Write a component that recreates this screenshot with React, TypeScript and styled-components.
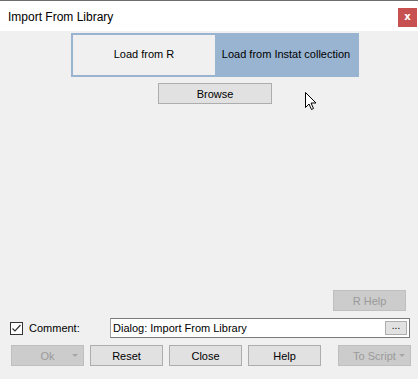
import React from "react";
import styled, { createGlobalStyle } from "styled-components";

const Global = createGlobalStyle`
  html, body { margin: 0; padding: 0; background: #f0f0f0; }
  * { box-sizing: border-box; }
`;

const Window = styled.div`
  width: 418px;
  height: 379px;
  display: flex;
  flex-direction: column;
  font-family: "Liberation Sans", Arial, sans-serif;
  font-size: 11px;
  color: #000;
  position: relative;
  overflow: hidden;
`;

const TitleBar = styled.div`
  height: 31px;
  flex: none;
  background: #fff;
  border-top: 1px solid #6d6d6d;
  display: flex;
  align-items: flex-start;
  justify-content: space-between;
  padding: 0 1px 0 8px;
`;

const Title = styled.div`
  font-family: "Liberation Sans", Arial, sans-serif;
  font-size: 12px;
  line-height: 16px;
  margin-top: 8px;
  color: #000;
`;

const CloseBtn = styled.div`
  width: 19px;
  height: 19px;
  margin-top: 7px;
  background: #c75050;
  color: #fff;
  font-family: "DejaVu Sans", sans-serif;
  font-weight: bold;
  font-size: 10px;
  line-height: 18px;
  text-align: center;
`;

const Body = styled.div`
  flex: 1;
  background: #f0f0f0;
  display: flex;
  flex-direction: column;
  padding: 2px 0 13px 0;
`;

const Toggle = styled.div`
  margin-left: 71px;
  width: 288px;
  height: 44px;
  border: 2px solid #99b4d1;
  display: flex;
`;

const ToggleOption = styled.div<{ $active?: boolean }>`
  flex: 1;
  display: flex;
  align-items: center;
  justify-content: center;
  background: ${(p) => (p.$active ? "#99b4d1" : "#f0f0f0")};
  font-size: 11px;
  padding-bottom: 2px;
`;

const BrowseRow = styled.div`
  margin: 6px 0 0 158px;
`;

const Button = styled.div<{ $w?: number; $disabled?: boolean }>`
  width: ${(p) => p.$w ?? 73}px;
  height: 21px;
  border: 1px solid ${(p) => (p.$disabled ? "#bfbfbf" : "#adadad")};
  background: ${(p) => (p.$disabled ? "#cccccc" : "#e1e1e1")};
  color: ${(p) => (p.$disabled ? "#9a9a9a" : "#000")};
  display: flex;
  align-items: center;
  justify-content: center;
  font-size: 11px;
  position: relative;
  flex: none;
`;

const Arrow = styled.span`
  position: absolute;
  right: 5px;
  top: 8px;
  width: 0;
  height: 0;
  border-left: 3px solid transparent;
  border-right: 3px solid transparent;
  border-top: 3px solid #a6a6a6;
`;

const Spacer = styled.div`
  flex: 1;
`;

const HelpRow = styled.div`
  display: flex;
  justify-content: flex-end;
  padding-right: 12px;
`;

const CommentRow = styled.div`
  display: flex;
  align-items: center;
  margin-top: 7px;
  height: 20px;
  padding-left: 10px;
`;

const CheckBox = styled.div`
  width: 13px;
  height: 13px;
  border: 1px solid #333;
  background: #fff;
  display: flex;
  align-items: center;
  justify-content: center;
  flex: none;
`;

const Label = styled.span`
  margin-left: 6px;
  width: 81px;
`;

const TextBox = styled.div`
  width: 300px;
  height: 20px;
  background: #fff;
  border: 1px solid #7a7a7a;
  border-left-color: #a0a0a0;
  display: flex;
  align-items: center;
  padding-left: 2px;
  position: relative;
`;

const Dots = styled.div`
  position: absolute;
  right: 2px;
  top: 2px;
  width: 22px;
  height: 14px;
  border: 1px solid #adadad;
  background: #e1e1e1;
  font-size: 10px;
  line-height: 8px;
  text-align: center;
`;

const ButtonRow = styled.div`
  display: flex;
  margin-top: 7px;
  padding-left: 11px;
  gap: 6px;
`;

const Cursor = styled.svg`
  position: absolute;
  left: 305px;
  top: 92px;
`;

export default function App() {
  return (
    <>
      <Global />
      <Window>
        <TitleBar>
          <Title>Import From Library</Title>
          <CloseBtn>x</CloseBtn>
        </TitleBar>
        <Body>
          <Toggle>
            <ToggleOption>Load from R</ToggleOption>
            <ToggleOption $active>Load from Instat collection</ToggleOption>
          </Toggle>
          <BrowseRow>
            <Button $w={114}>Browse</Button>
          </BrowseRow>
          <Spacer />
          <HelpRow>
            <Button $disabled>R Help</Button>
          </HelpRow>
          <CommentRow>
            <CheckBox>
              <svg width="11" height="11" viewBox="0 0 11 11">
                <path d="M1.5 5.5 L4 8 L9.5 2" stroke="#333" strokeWidth="1.2" fill="none" />
              </svg>
            </CheckBox>
            <Label>Comment:</Label>
            <TextBox>
              Dialog: Import From Library
              <Dots>...</Dots>
            </TextBox>
          </CommentRow>
          <ButtonRow>
            <Button $disabled>
              Ok
              <Arrow />
            </Button>
            <Button>Reset</Button>
            <Button>Close</Button>
            <Button>Help</Button>
            <Button $disabled style={{ marginLeft: 11 }}>
              To Script
              <Arrow />
            </Button>
          </ButtonRow>
        </Body>
        <Cursor width="12" height="20" viewBox="0 0 12 20">
          <path
            d="M0.5 0.5 L0.5 15.5 L4 12 L6.5 17.5 L8.5 16.5 L6 11 L11 11 Z"
            fill="#fff"
            stroke="#000"
            strokeWidth="1"
          />
        </Cursor>
      </Window>
    </>
  );
}
